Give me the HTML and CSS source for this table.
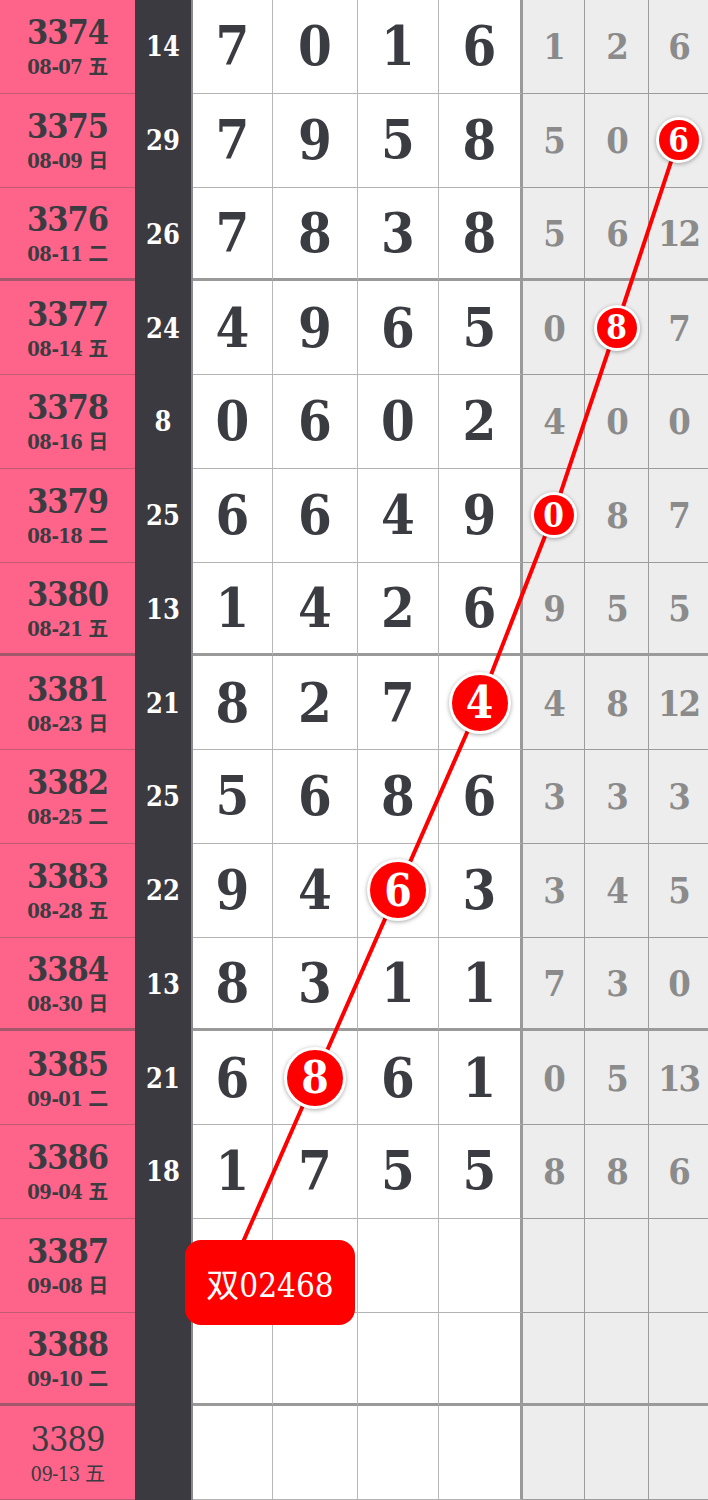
FILE: index.html
```html
<!DOCTYPE html>
<html lang="zh">
<head>
  <meta charset="UTF-8" />
  <meta name="viewport" content="width=device-width, initial-scale=1.0"/>
  <title>走势图</title>
  <link rel="stylesheet" href="styles.css">
</head>
<body>

  <div class="chart">
    <div class="row">
      <div class="issue"><b>3374</b><small>08-07 五</small></div>
      <div class="sum">14</div>
      <div class="d">7</div><div class="d">0</div><div class="d">1</div><div class="d last">6</div>
      <div class="g">1</div><div class="g">2</div><div class="g">6</div>
    </div>
    <div class="row">
      <div class="issue"><b>3375</b><small>08-09 日</small></div>
      <div class="sum">29</div>
      <div class="d">7</div><div class="d">9</div><div class="d">5</div><div class="d last">8</div>
      <div class="g">5</div><div class="g">0</div><div class="g"><span class="ball small">6</span></div>
    </div>
    <div class="row sep">
      <div class="issue"><b>3376</b><small>08-11 二</small></div>
      <div class="sum">26</div>
      <div class="d">7</div><div class="d">8</div><div class="d">3</div><div class="d last">8</div>
      <div class="g">5</div><div class="g">6</div><div class="g">12</div>
    </div>
    <div class="row">
      <div class="issue"><b>3377</b><small>08-14 五</small></div>
      <div class="sum">24</div>
      <div class="d">4</div><div class="d">9</div><div class="d">6</div><div class="d last">5</div>
      <div class="g">0</div><div class="g"><span class="ball small">8</span></div><div class="g">7</div>
    </div>
    <div class="row">
      <div class="issue"><b>3378</b><small>08-16 日</small></div>
      <div class="sum">8</div>
      <div class="d">0</div><div class="d">6</div><div class="d">0</div><div class="d last">2</div>
      <div class="g">4</div><div class="g">0</div><div class="g">0</div>
    </div>
    <div class="row">
      <div class="issue"><b>3379</b><small>08-18 二</small></div>
      <div class="sum">25</div>
      <div class="d">6</div><div class="d">6</div><div class="d">4</div><div class="d last">9</div>
      <div class="g"><span class="ball small">0</span></div><div class="g">8</div><div class="g">7</div>
    </div>
    <div class="row sep">
      <div class="issue"><b>3380</b><small>08-21 五</small></div>
      <div class="sum">13</div>
      <div class="d">1</div><div class="d">4</div><div class="d">2</div><div class="d last">6</div>
      <div class="g">9</div><div class="g">5</div><div class="g">5</div>
    </div>
    <div class="row">
      <div class="issue"><b>3381</b><small>08-23 日</small></div>
      <div class="sum">21</div>
      <div class="d">8</div><div class="d">2</div><div class="d">7</div><div class="d last"><span class="ball">4</span></div>
      <div class="g">4</div><div class="g">8</div><div class="g">12</div>
    </div>
    <div class="row">
      <div class="issue"><b>3382</b><small>08-25 二</small></div>
      <div class="sum">25</div>
      <div class="d">5</div><div class="d">6</div><div class="d">8</div><div class="d last">6</div>
      <div class="g">3</div><div class="g">3</div><div class="g">3</div>
    </div>
    <div class="row">
      <div class="issue"><b>3383</b><small>08-28 五</small></div>
      <div class="sum">22</div>
      <div class="d">9</div><div class="d">4</div><div class="d"><span class="ball">6</span></div><div class="d last">3</div>
      <div class="g">3</div><div class="g">4</div><div class="g">5</div>
    </div>
    <div class="row sep">
      <div class="issue"><b>3384</b><small>08-30 日</small></div>
      <div class="sum">13</div>
      <div class="d">8</div><div class="d">3</div><div class="d">1</div><div class="d last">1</div>
      <div class="g">7</div><div class="g">3</div><div class="g">0</div>
    </div>
    <div class="row">
      <div class="issue"><b>3385</b><small>09-01 二</small></div>
      <div class="sum">21</div>
      <div class="d">6</div><div class="d"><span class="ball">8</span></div><div class="d">6</div><div class="d last">1</div>
      <div class="g">0</div><div class="g">5</div><div class="g">13</div>
    </div>
    <div class="row">
      <div class="issue"><b>3386</b><small>09-04 五</small></div>
      <div class="sum">18</div>
      <div class="d">1</div><div class="d">7</div><div class="d">5</div><div class="d last">5</div>
      <div class="g">8</div><div class="g">8</div><div class="g">6</div>
    </div>
    <div class="row">
      <div class="issue"><b>3387</b><small>09-08 日</small></div>
      <div class="sum"></div>
      <div class="d"></div><div class="d"></div><div class="d"></div><div class="d last"></div>
      <div class="g"></div><div class="g"></div><div class="g"></div>
    </div>
    <div class="row sep">
      <div class="issue"><b>3388</b><small>09-10 二</small></div>
      <div class="sum"></div>
      <div class="d"></div><div class="d"></div><div class="d"></div><div class="d last"></div>
      <div class="g"></div><div class="g"></div><div class="g"></div>
    </div>
    <div class="row">
      <div class="issue plain"><b>3389</b><small>09-13 五</small></div>
      <div class="sum"></div>
      <div class="d"></div><div class="d"></div><div class="d"></div><div class="d last"></div>
      <div class="g"></div><div class="g"></div><div class="g"></div>
    </div>

    <!-- trend line between the picked numbers -->
    <svg class="trend" width="708" height="1500" viewBox="0 0 708 1500">
      <polyline points="678,140.6 616,328 553,515.6 480,703 397.5,890.6 315,1078 243,1242"
                fill="none" stroke="#ff0000" stroke-width="4" />
    </svg>

    <div class="tag">双02468</div>
  </div>

</body>
</html>
```

FILE: styles.css
```css
body {
  margin: 0;
  padding: 0;
  background: #ffffff;
  font-family: "DejaVu Serif Condensed", "DejaVu Serif", "Noto Sans CJK SC", serif;
  color: #3b3b42;
}

.chart {
  position: relative;
  width: 708px;
  height: 1500px;
  overflow: hidden;
}

.row {
  display: grid;
  grid-template-columns: 135px 58px 80px 85px 81px 84px 62px 64px 59px;
  height: 93.75px;
}

.row > div {
  box-sizing: border-box;
  display: flex;
  align-items: center;
  justify-content: center;
  border-bottom: 1px solid #b3b3b3;
}

.row.sep > div {
  border-bottom: 3px solid #9a9a9a;
}

.issue {
  flex-direction: column;
  background: #fe6489;
  line-height: 1;
}

.row > .issue {
  border-bottom-color: #c25a74;
}

.row.sep > .issue {
  border-bottom-color: #a4566a;
}

.issue b {
  font-size: 34px;
  font-weight: 600;
  letter-spacing: -1px;
}

.issue small {
  margin-top: 8px;
  font-size: 20px;
  font-weight: bold;
  letter-spacing: -0.5px;
}

.issue.plain b,
.issue.plain small {
  font-weight: normal;
}

.row > .sum {
  background: #3a3a40;
  color: #ffffff;
  font-size: 27px;
  font-weight: bold;
  border-bottom: none;
  border-right: 2px solid #8a8a8e;
}

.row.sep > .sum {
  border-bottom: none;
}

.d {
  font-size: 54px;
  font-weight: bold;
  border-right: 1px solid #b8b8b8;
}

.row > .d.last {
  border-right: 3px solid #9a9a9a;
}

.g {
  background: #ededed;
  color: #8b8b8b;
  font-size: 36px;
  font-weight: bold;
  letter-spacing: -2px;
  border-right: 1px solid #9c9c9c;
}

.row > .g:last-child {
  border-right: none;
}

.row > .g {
  border-bottom-color: #9c9c9c;
}

.ball {
  position: relative;
  z-index: 2;
  box-sizing: border-box;
  display: flex;
  align-items: center;
  justify-content: center;
  width: 62px;
  height: 62px;
  border-radius: 50%;
  background: #ff0000;
  border: 3px solid #ffffff;
  box-shadow: 0 1px 4px rgba(0, 0, 0, 0.35);
  color: #ffffff;
  font-size: 44px;
  font-weight: bold;
  letter-spacing: 0;
}

.ball.small {
  width: 46px;
  height: 46px;
  font-size: 33px;
}

.trend {
  position: absolute;
  top: 0;
  left: 0;
  z-index: 1;
  pointer-events: none;
}

.tag {
  position: absolute;
  z-index: 2;
  left: 185px;
  top: 1240px;
  width: 170px;
  height: 85px;
  border-radius: 16px;
  background: #ff0000;
  color: #ffffff;
  font-size: 33px;
  display: flex;
  align-items: center;
  justify-content: center;
}
```
